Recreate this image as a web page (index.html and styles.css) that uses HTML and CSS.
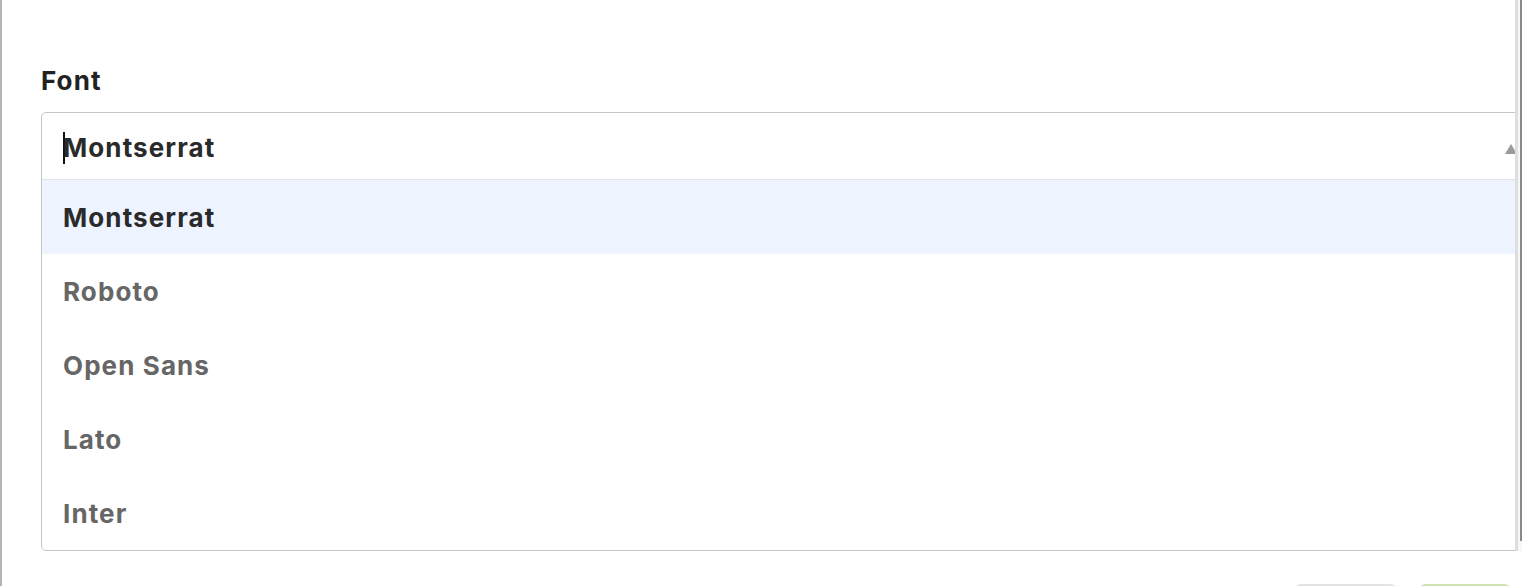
FILE: index.html
```html
<!DOCTYPE html>
<html lang="en">
<head>
<meta charset="utf-8">
<title>Font select</title>
<link rel="stylesheet" href="styles.css">
</head>
<body>
<div class="page">
  <div class="edge-left"></div>
  <div class="content">
    <label class="field-label">Font</label>
    <div class="select">
      <div class="select-input">
        <span class="caret"></span><span class="value">Montserrat</span>
        <span class="arrow"></span>
      </div>
      <ul class="options">
        <li class="option active">Montserrat</li>
        <li class="option">Roboto</li>
        <li class="option">Open Sans</li>
        <li class="option">Lato</li>
        <li class="option">Inter</li>
      </ul>
    </div>
    <div class="actions">
      <span class="btn btn-cancel"></span>
      <span class="btn btn-ok"></span>
    </div>
  </div>
  <div class="scroll-strip"><div class="scroll-thumb"></div></div>
</div>
</body>
</html>
```

FILE: styles.css
```css
* { box-sizing: border-box; }
html, body { margin: 0; padding: 0; background: #fff; overflow: hidden; }
body { font-family: "Inter", "Liberation Sans", sans-serif; color: #222; }

.page {
  position: relative;
  display: flex;
  width: 1522px;
  height: 586px;
  overflow: hidden;
}
.edge-left {
  width: 2px;
  flex: none;
  background: #b4b4b4;
}
.content {
  flex: 1;
  min-width: 0;
  padding: 66px 0 0 39px;
  display: flex;
  flex-direction: column;
}
.field-label {
  font-weight: 700;
  font-size: 26px;
  letter-spacing: 1.1px;
  line-height: 30px;
  color: #222;
}
.select {
  margin-top: 16px;
  border: 1px solid #c6c6c6;
  border-radius: 5px;
  background: #fff;
}
.select-input {
  position: relative;
  height: 67px;
  display: flex;
  align-items: center;
  padding: 3px 0 0 21px;
  border-bottom: 1px solid #e3e3e3;
  font-weight: 700;
  font-size: 26px;
  letter-spacing: 1.1px;
  color: #2a2a2a;
}
.caret {
  width: 2px;
  height: 32px;
  background: #111;
}
.value { margin-left: -2px; }
.arrow {
  position: absolute;
  right: 4px;
  top: 31px;
  width: 0;
  height: 0;
  border-left: 6px solid transparent;
  border-right: 6px solid transparent;
  border-bottom: 10px solid #9a9a9a;
}
.options {
  list-style: none;
  margin: 0;
  padding: 0;
}
.option {
  height: 74px;
  display: flex;
  align-items: center;
  padding-left: 21px;
  font-weight: 700;
  font-size: 26px;
  letter-spacing: 1.1px;
  color: #666;
}
.option.active {
  background: #edf4ff;
  color: #2a2a2a;
}
.actions {
  display: flex;
  justify-content: flex-end;
  gap: 20px;
  margin-top: 33px;
  padding-right: 10px;
}
.btn {
  display: block;
  flex: none;
  height: 30px;
  border-radius: 8px;
}
.btn-cancel { width: 105px; background: #e4e4e4; }
.btn-ok { width: 94px; background: #cfe0b2; }

.scroll-strip {
  position: absolute;
  top: 0;
  right: 0;
  width: 7px;
  height: 551px;
  background: #f7f7f7;
  border-left: 3px solid #dedede;
}
.scroll-thumb {
  position: absolute;
  right: 0;
  top: 0;
  width: 2px;
  height: 541px;
  background: #8a8a8a;
}
```
